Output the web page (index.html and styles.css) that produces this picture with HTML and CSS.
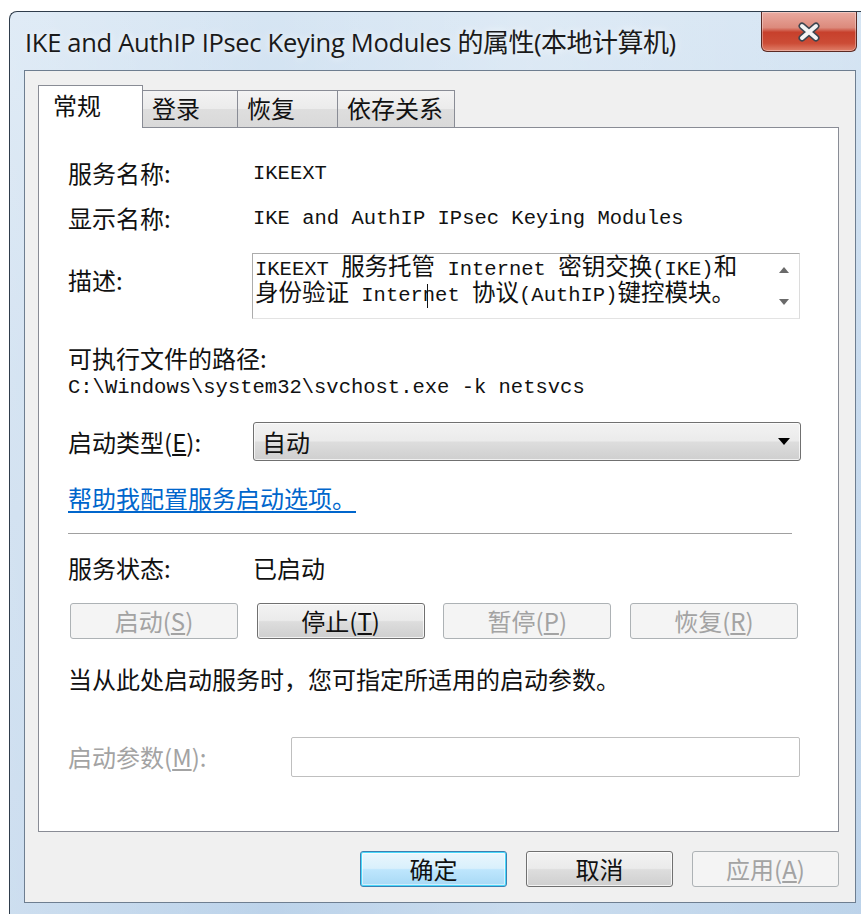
FILE: index.html
```html
<!DOCTYPE html>
<html lang="zh-CN">
<head>
<meta charset="utf-8">
<title>IKE and AuthIP IPsec Keying Modules 的属性(本地计算机)</title>
<link rel="stylesheet" href="styles.css">
</head>
<body>
<div class="window">
  <div class="titlebar">
    <div class="title">IKE and AuthIP IPsec Keying Modules <span class="title-cj">的属性(本地计算机)</span></div>
    <div class="close-btn">
      <svg width="26" height="20" viewBox="0 0 26 20">
        <path d="M6 4 L20 16 M20 4 L6 16" stroke="#3d4650" stroke-width="7" stroke-linecap="round"/>
        <path d="M6 4 L20 16 M20 4 L6 16" stroke="#f4f4f4" stroke-width="4" stroke-linecap="round"/>
      </svg>
    </div>
  </div>
  <div class="client">
    <div class="tabs">
      <div class="tab active">常规</div>
      <div class="tab t2">登录</div>
      <div class="tab t3">恢复</div>
      <div class="tab t4">依存关系</div>
    </div>
    <div class="panel">
      <div class="row r-name">
        <span class="label">服务名称:</span>
        <span class="mono">IKEEXT</span>
      </div>
      <div class="row r-disp">
        <span class="label">显示名称:</span>
        <span class="mono">IKE and AuthIP IPsec Keying Modules</span>
      </div>
      <div class="row r-desc">
        <span class="label desc-label">描述:</span>
        <div class="desc-box">
          <div class="desc-text mono">
            <div class="desc-line">IKEEXT <span class="cj">服务托管</span> Internet <span class="cj">密钥交换</span>(IKE)<span class="cj">和</span></div>
            <div class="desc-line"><span class="cj">身份验证</span> Internet <span class="cj">协议</span>(AuthIP)<span class="cj">键控模块。</span></div>
          </div>
          <div class="desc-scroll">
            <svg width="12" height="8" viewBox="0 0 12 8"><path d="M1 7 L6 1 L11 7 Z" fill="#6a6a6a"/></svg>
            <svg width="12" height="8" viewBox="0 0 12 8"><path d="M1 1 L6 7 L11 1 Z" fill="#6a6a6a"/></svg>
          </div>
          <span class="ibeam"></span>
        </div>
      </div>
      <div class="line l-path-label">可执行文件的路径:</div>
      <div class="l-path mono">C:\Windows\system32\svchost.exe -k netsvcs</div>
      <div class="row r-type">
        <span class="label">启动类型(<u>E</u>):</span>
        <div class="combo">
          <span class="combo-text">自动</span>
          <svg width="14" height="9" viewBox="0 0 14 9"><path d="M1 1 L13 1 L7 8 Z" fill="#000"/></svg>
        </div>
      </div>
      <div class="line l-link"><a class="help-link" href="#">帮助我配置服务启动选项。</a></div>
      <div class="separator"></div>
      <div class="row r-status">
        <span class="label">服务状态:</span>
        <span class="status">已启动</span>
      </div>
      <div class="svc-buttons">
        <button class="btn disabled">启动(<u>S</u>)</button>
        <button class="btn">停止(<u>T</u>)</button>
        <button class="btn disabled">暂停(<u>P</u>)</button>
        <button class="btn disabled">恢复(<u>R</u>)</button>
      </div>
      <div class="line l-hint">当从此处启动服务时，您可指定所适用的启动参数。</div>
      <div class="row r-param">
        <span class="label param-label">启动参数(<u>M</u>):</span>
        <div class="param-input"></div>
      </div>
    </div>
    <div class="dialog-buttons">
      <button class="btn default">确定</button>
      <button class="btn">取消</button>
      <button class="btn disabled">应用(<u>A</u>)</button>
    </div>
  </div>
</div>
</body>
</html>
```

FILE: styles.css
```css
html, body {
  margin: 0;
  padding: 0;
  background: #ffffff;
  overflow: hidden;
}

body {
  width: 861px;
  height: 914px;
  font-family: "Noto Sans CJK SC", sans-serif;
  color: #111;
}

/* glass frame */
.window {
  margin: 11px 0 0 9px;
  width: 866px;
  height: 915px;
  box-sizing: border-box;
  border: 1px solid #2f3d4c;
  border-right: none;
  border-radius: 8px 0 0 0;
  background:
    linear-gradient(90deg, rgba(255,255,255,0.25), rgba(255,255,255,0) 30%, rgba(255,255,255,0.2) 60%, rgba(255,255,255,0) 100%),
    linear-gradient(180deg, #d6e5f3 0%, #c8dbee 40%, #bcd3ea 100%);
  padding: 0 0 0 14px;
  display: flex;
  flex-direction: column;
}

.titlebar {
  height: 58px;
  display: flex;
  align-items: flex-start;
  justify-content: space-between;
}

.title {
  font-family: "Open Sans", "Noto Sans CJK SC", sans-serif;
  font-size: 25.5px;
  color: #1a1a1a;
  line-height: 32px;
  margin-top: 14px;
  margin-left: 1px;
  letter-spacing: -0.3px;
  white-space: nowrap;
  text-shadow: 0 0 8px rgba(255,255,255,0.9);
}

.title-cj {
  font-size: 26px;
  letter-spacing: -0.5px;
}

.close-btn {
  width: 96px;
  height: 40px;
  margin-right: 18px;
  box-sizing: border-box;
  border: 1px solid #5b2a24;
  border-top: none;
  border-radius: 0 0 6px 6px;
  background: linear-gradient(180deg, #e9aaa0 0%, #dc8a7c 40%, #c7402c 52%, #cc4c36 80%, #e0806a 100%);
  box-shadow: inset 0 0 0 1px rgba(255,255,255,0.35);
  display: flex;
  align-items: center;
  justify-content: center;
}

/* client area */
.client {
  width: 832px;
  height: 833px;
  box-sizing: border-box;
  border: 1px solid #6e7e90;
  background: #f0f0f0;
  padding: 14px 0 0 13px;
  display: flex;
  flex-direction: column;
}

.tabs {
  display: flex;
  align-items: flex-end;
  height: 42px;
  position: relative;
  z-index: 1;
}

.tab {
  box-sizing: border-box;
  height: 37px;
  border: 1px solid #898c95;
  border-bottom: none;
  border-left: none;
  background: linear-gradient(180deg, #f3f3f3 0%, #ebebeb 50%, #dedede 51%, #d9d9d9 100%);
  font-size: 24px;
  line-height: 34px;
  padding-left: 9px;
  color: #111;
}

.tab.active {
  width: 105px;
  height: 43px;
  margin-bottom: -1px;
  border-left: 1px solid #898c95;
  background: #ffffff;
  padding-left: 14px;
  line-height: 38px;
}

.tab.t2 { width: 95px; }
.tab.t3 { width: 100px; }
.tab.t4 { width: 117px; }

.panel {
  width: 801px;
  height: 705px;
  box-sizing: border-box;
  border: 1px solid #898c95;
  background: #ffffff;
  padding: 30px 0 0 29px;
  display: flex;
  flex-direction: column;
}

.row {
  display: flex;
  align-items: center;
}

.label {
  width: 185px;
  flex: none;
  font-size: 24px;
  line-height: 30px;
  color: #111;
}

.mono {
  font-family: "Liberation Mono", "Noto Sans CJK SC", monospace;
  font-size: 20.5px;
  color: #111;
}

.cj {
  font-family: "Noto Sans CJK SC", sans-serif;
  font-size: 23.5px;
  line-height: 18px;
}

.r-name { height: 30px; }
.r-disp { height: 30px; margin-top: 15px; }

.r-desc {
  margin-top: 20px;
  align-items: flex-start;
}

.desc-label { padding-top: 12px; }

.desc-box {
  position: relative;
  width: 548px;
  height: 66px;
  box-sizing: border-box;
  border: 1px solid #acacac;
  border-right-color: #dcdcdc;
  border-bottom-color: #e3e3e3;
  display: flex;
  margin-left: -1px;
}

.desc-text {
  flex: 1;
  padding: 2px 0 0 2px;
  white-space: nowrap;
}

.desc-line {
  height: 26px;
  line-height: 26px;
}

.desc-scroll {
  width: 26px;
  flex: none;
  display: flex;
  flex-direction: column;
  justify-content: space-between;
  align-items: center;
  padding: 12px 0 12px;
  margin-right: 2px;
}

.ibeam {
  position: absolute;
  left: 174px;
  top: 30px;
  width: 1px;
  height: 24px;
  background: #111;
}

.line {
  font-size: 24px;
  line-height: 24px;
}

.l-path-label { margin-top: 27px; }
.l-path { margin-top: 6px; line-height: 24px; }

.r-type { margin-top: 22px; height: 39px; }

.combo {
  width: 548px;
  height: 39px;
  box-sizing: border-box;
  border: 1px solid #707070;
  border-radius: 3px;
  background: linear-gradient(180deg, #f2f2f2 0%, #ebebeb 48%, #dddddd 52%, #cfcfcf 100%);
  box-shadow: inset 0 0 0 1px rgba(255,255,255,0.7);
  display: flex;
  align-items: center;
  justify-content: space-between;
  padding: 0 9px 0 8px;
}

.combo-text { font-size: 24px; line-height: 30px; }

.l-link { margin-top: 25px; }

.help-link {
  color: #0066cc;
  text-decoration: underline;
  text-underline-offset: 3px;
}

.separator {
  margin-top: 23px;
  width: 724px;
  height: 1px;
  background: #a0a0a0;
  border-bottom: 1px solid #ffffff;
}

.r-status { margin-top: 21px; height: 24px; }
.status { font-size: 24px; line-height: 24px; }

.svc-buttons {
  margin-top: 23px;
  width: 728px;
  margin-left: 2px;
  display: flex;
  justify-content: space-between;
}

.svc-buttons .btn { width: 168px; }

.btn {
  height: 36px;
  box-sizing: border-box;
  border: 1px solid #707070;
  border-radius: 3px;
  background: linear-gradient(180deg, #f2f2f2 0%, #ebebeb 48%, #dddddd 52%, #cfcfcf 100%);
  box-shadow: inset 0 0 0 1px rgba(255,255,255,0.75);
  font-family: "Noto Sans CJK SC", sans-serif;
  font-size: 24px;
  line-height: 30px;
  color: #111;
  padding: 0;
  margin: 0;
}

.btn u { text-underline-offset: 2px; }

.btn.disabled {
  border-color: #adb2b5;
  background: #f4f4f4;
  box-shadow: none;
  color: #a3a3a3;
}

.btn.default {
  border-color: #3c7fb1;
  background: linear-gradient(180deg, #eaf6fd 0%, #d9f0fc 48%, #bee6fd 52%, #a7d9f5 100%);
  box-shadow: inset 0 0 0 1px #48d8fb, inset 0 0 0 2px rgba(255,255,255,0.5);
}

.l-hint { margin-top: 28px; }

.r-param { margin-top: 46px; height: 40px; }

.param-label { width: 223px; color: #a3a3a3; }

.param-input {
  width: 509px;
  height: 40px;
  box-sizing: border-box;
  border: 1px solid #bfbfbf;
  border-radius: 2px;
  background: #ffffff;
}

.dialog-buttons {
  margin-top: 19px;
  width: 801px;
  display: flex;
  justify-content: flex-end;
  gap: 19px;
}

.dialog-buttons .btn { width: 147px; }
```
